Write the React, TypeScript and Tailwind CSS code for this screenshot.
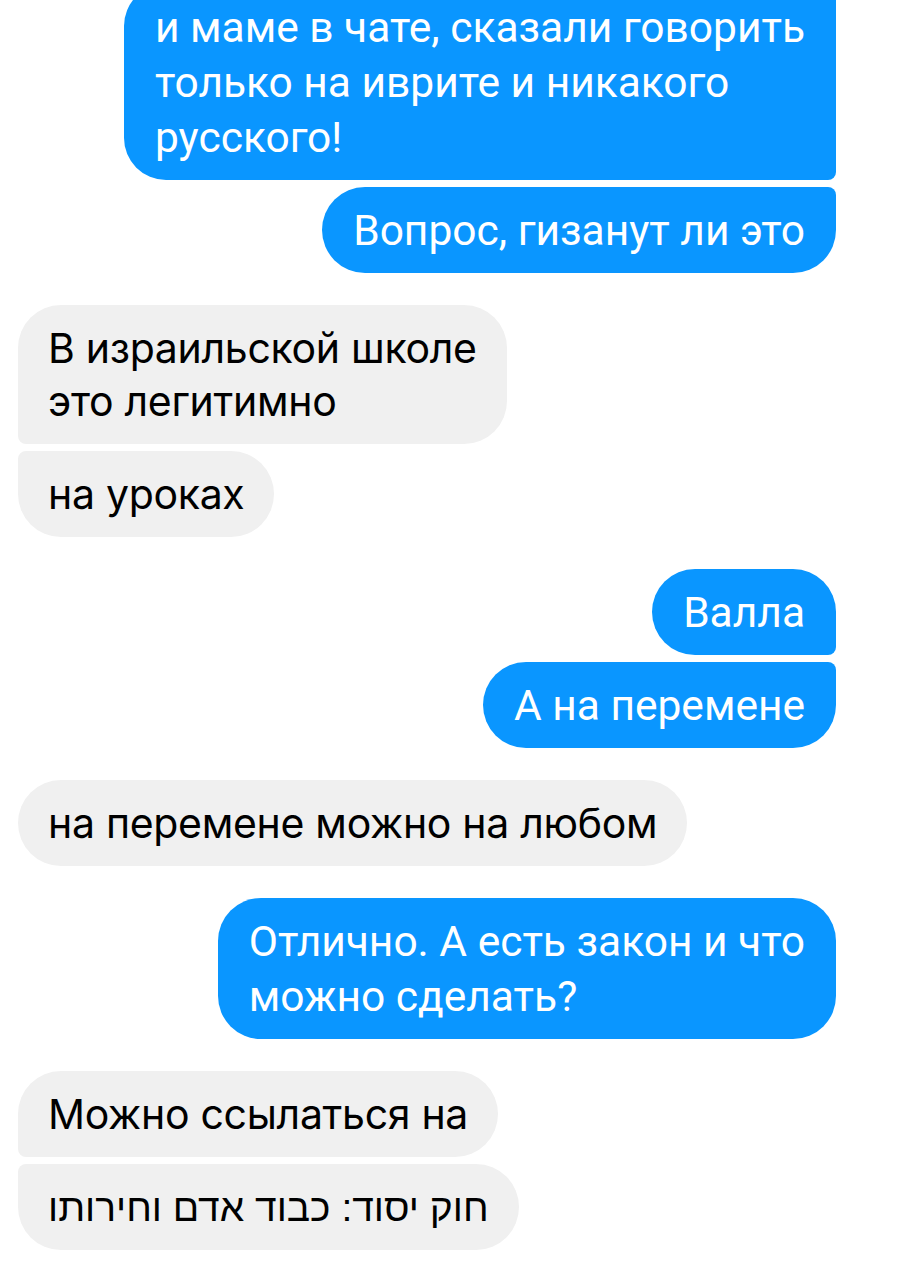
type Msg = {
  lines: string[]
  r: string
  dir?: 'rtl'
}

type Group = {
  side: 'in' | 'out'
  msgs: Msg[]
}

const groups: Group[] = [
  {
    side: 'out',
    msgs: [
      {
        lines: ['и маме в чате, сказали говорить', 'только на иврите и никакого', 'русского!'],
        r: 'rounded-tl-[42px] rounded-bl-[42px] rounded-tr-[8px] rounded-br-[8px]',
      },
      { lines: ['Вопрос, гизанут ли это'], r: 'rounded-l-[43px] rounded-tr-[8px] rounded-br-[43px]' },
    ],
  },
  {
    side: 'in',
    msgs: [
      {
        lines: ['В израильской школе', 'это легитимно'],
        r: 'rounded-tl-[43px] rounded-bl-[8px] rounded-r-[43px]',
      },
      { lines: ['на уроках'], r: 'rounded-tl-[8px] rounded-bl-[43px] rounded-r-[43px]' },
    ],
  },
  {
    side: 'out',
    msgs: [
      { lines: ['Валла'], r: 'rounded-l-[43px] rounded-tr-[43px] rounded-br-[8px]' },
      { lines: ['А на перемене'], r: 'rounded-l-[43px] rounded-tr-[8px] rounded-br-[43px]' },
    ],
  },
  {
    side: 'in',
    msgs: [{ lines: ['на перемене можно на любом'], r: 'rounded-[43px]' }],
  },
  {
    side: 'out',
    msgs: [{ lines: ['Отлично. А есть закон и что', 'можно сделать?'], r: 'rounded-[43px]' }],
  },
  {
    side: 'in',
    msgs: [
      { lines: ['Можно ссылаться на'], r: 'rounded-tl-[43px] rounded-bl-[8px] rounded-r-[43px]' },
      { lines: ['חוק יסוד: כבוד אדם וחירותו'], r: 'rounded-tl-[8px] rounded-bl-[43px] rounded-r-[43px]', dir: 'rtl' },
    ],
  },
]

function Bubble({ msg, side }: { msg: Msg; side: 'in' | 'out' }) {
  const out = side === 'out'
  const font = out
    ? "text-[42.5px] leading-[55px] font-['Roboto',sans-serif]"
    : msg.dir
      ? "text-[39px] leading-[53px] font-['Liberation_Sans',sans-serif]"
      : "text-[41px] leading-[53px] tracking-[-0.3px] font-['Inter','Liberation_Sans',sans-serif]"
  return (
    <div
      dir={msg.dir}
      className={
        out
          ? `bg-[#0a96ff] text-white px-[31px] py-[15.5px] ${font} ${msg.r}`
          : `bg-[#f0f0f0] text-black px-[30px] py-[16.5px] ${font} ${msg.r}`
      }
    >
      {msg.lines.map((l, i) => (
        <div key={i} className="whitespace-nowrap">
          {l}
        </div>
      ))}
    </div>
  )
}

export default function App() {
  return (
    <div className="w-[900px] h-[1280px] overflow-hidden bg-white">
      <div className="-mt-[16px] pl-[18px] pr-[64px] flex flex-col gap-[32px]">
        {groups.map((g, gi) => (
          <div key={gi} className={`flex flex-col gap-[7px] ${g.side === 'out' ? 'items-end' : 'items-start'}`}>
            {g.msgs.map((m, mi) => (
              <Bubble key={mi} msg={m} side={g.side} />
            ))}
          </div>
        ))}
      </div>
    </div>
  )
}
